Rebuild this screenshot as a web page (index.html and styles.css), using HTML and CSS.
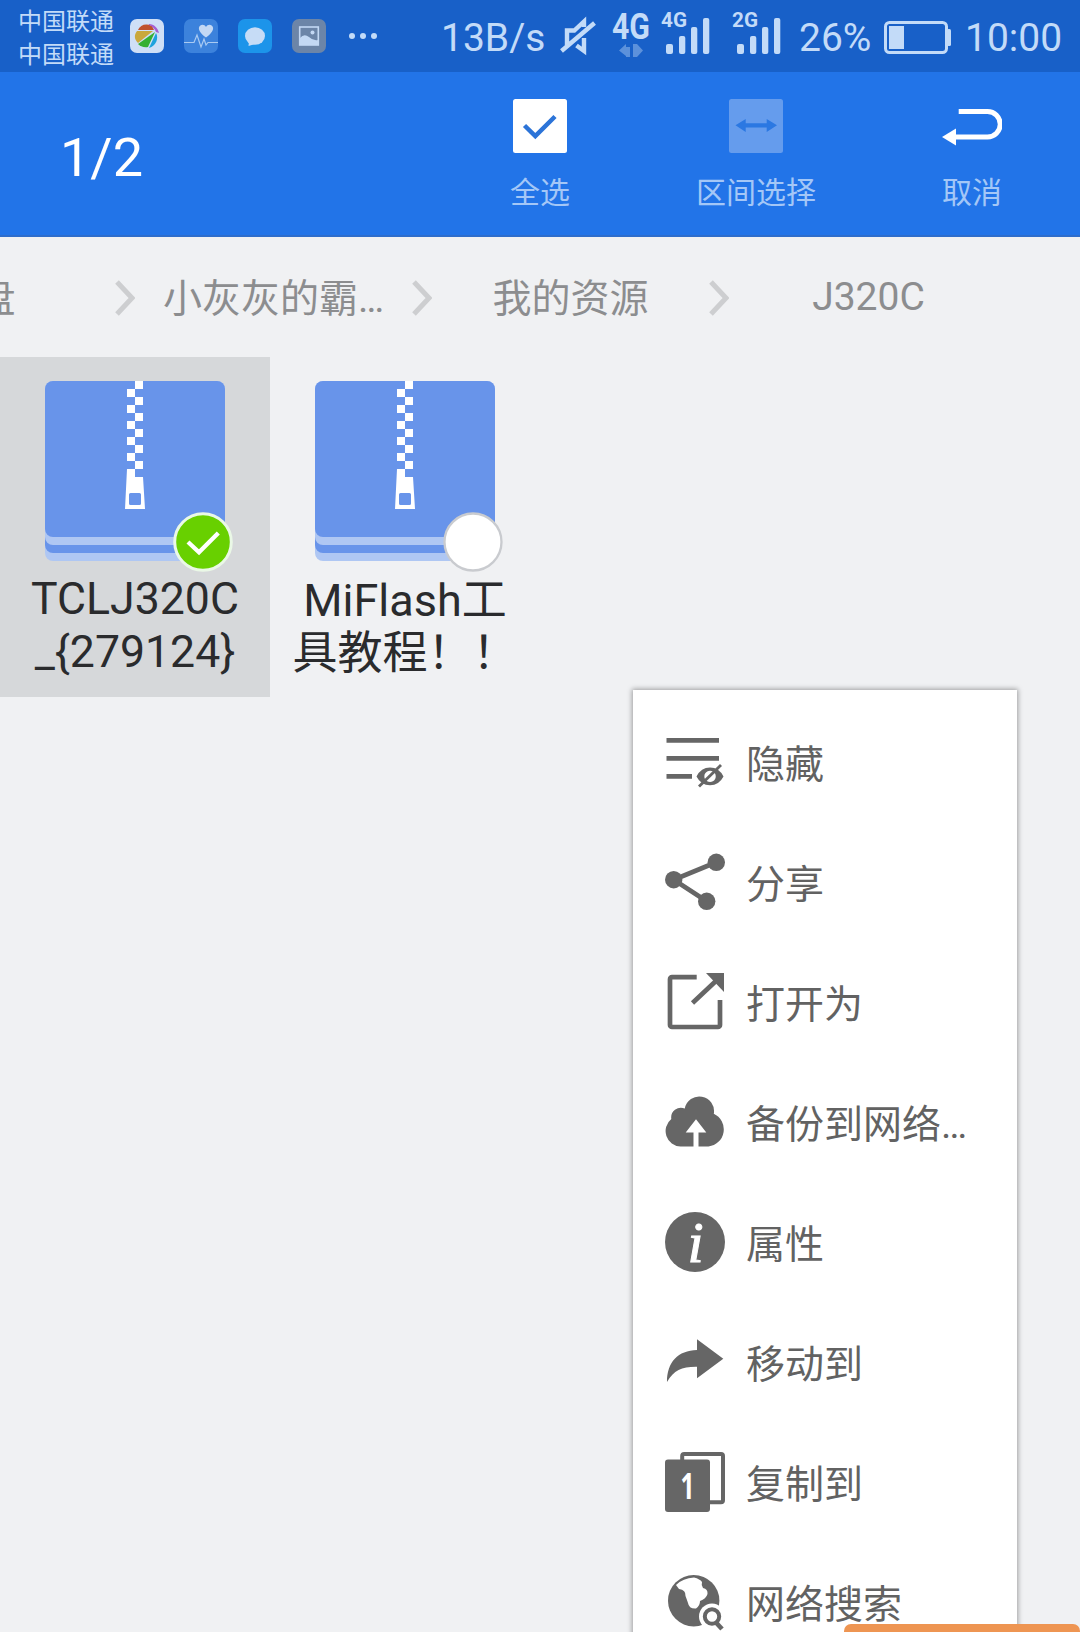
FILE: index.html
```html
<!DOCTYPE html>
<html lang="zh-CN">
<head>
    <meta charset="utf-8">
    <title>J320C</title>
    <link rel="stylesheet" href="styles.css">
</head>
<body>
    <svg class="defs" width="0" height="0">
        <symbol id="zip" viewBox="0 0 180 180">
            <rect width="180" height="180" rx="8" fill="#afc7f3" />
            <path d="M0 140H180V164a8 8 0 0 1-8 8H8a8 8 0 0 1-8-8Z" fill="#6894ea" />
            <path d="M0 140H180V156a8 8 0 0 1-8 8H8a8 8 0 0 1-8-8Z" fill="#afc7f3" />
            <rect width="180" height="156" rx="8" fill="#6894ea" />
            <path fill="#fff" d="M90 0h8v8h-8zM82 8h8v8h-8zM90 16h8v8h-8zM82 24h8v8h-8zM90 32h8v8h-8zM82 40h8v8h-8zM90 48h8v8h-8zM82 56h8v8h-8zM90 64h8v8h-8zM82 72h8v8h-8zM90 80h8v8h-8z" />
            <path fill="#fff" fill-rule="evenodd" d="M82 88h8v8h8l2 32H80ZM85.500 112a1.500 1.500 0 0 0-1.500 1.500v9a1.500 1.500 0 0 0 1.500 1.500h9a1.500 1.500 0 0 0 1.500-1.500v-9a1.500 1.500 0 0 0-1.500-1.500Z" />
        </symbol>
        <symbol id="bars" viewBox="0 0 44 37">
            <rect x="0" y="26" width="7" height="10" rx="2" />
            <rect x="13" y="18" width="6.300" height="18" rx="2" />
            <rect x="25" y="9" width="6.300" height="27" rx="2" />
            <rect x="37" y="0" width="6.300" height="36" rx="2" />
        </symbol>
    </svg>

    <header class="status">
        <div class="carriers">
            <span>中国联通</span>
            <span>中国联通</span>
        </div>
        <div class="notifications">
            <svg width="34" height="34" viewBox="0 0 34 34">
                <rect width="34" height="34" rx="7" fill="#cfdff6" />
                <path d="M8 11C10 6 16 4 22 7L24 11Z" fill="#c0512c" />
                <path d="M19 5C24 5 28 9 29 14L26 13C25 10 22 7 19 6Z" fill="#a65fd0" />
                <path d="M7 12L23 12L8 24C4 20 4 16 7 12Z" fill="#c9a83c" />
                <path d="M25 13L18 28C14 29 10 27 8 25Z" fill="#35b032" />
                <path d="M26 14C29 19 26 27 19 29Z" fill="#1ea2dd" />
            </svg>
            <svg width="34" height="34" viewBox="0 0 34 34">
                <rect width="34" height="34" rx="7" fill="#3c82dc" />
                <path d="M22 18.500C16 14 14.500 11 15 8.500C16 5 20.500 5 22 8C23.500 5 28 5 29 8.500C29.500 11 28 14 22 18.500Z" fill="#c3d8f4" />
                <path d="M0 23.500H10L13 16L17 28L20 20L22 26L24 23.500H34" fill="none" stroke="#a9caf2" stroke-width="1.200" />
            </svg>
            <svg width="34" height="34" viewBox="0 0 34 34">
                <rect width="34" height="34" rx="7" fill="#1c94ea" />
                <ellipse cx="17" cy="17" rx="10" ry="8.700" fill="#c6dcf6" />
                <path d="M11 22L10.500 27L17 25Z" fill="#c6dcf6" />
            </svg>
            <svg width="34" height="34" viewBox="0 0 34 34">
                <rect width="34" height="34" rx="7" fill="#6c85a8" />
                <rect x="7.700" y="8" width="18.600" height="18" fill="none" stroke="#c3d8f4" stroke-width="1.600" />
                <path d="M8 19Q12 14 17 18Q21 22 26 21V26H8Z" fill="#c3d8f4" />
                <circle cx="20.500" cy="13.500" r="2" fill="#c3d8f4" />
            </svg>
            <svg class="more" width="30" height="34" viewBox="0 0 30 34">
                <circle cx="4" cy="17" r="3" />
                <circle cx="15" cy="17" r="3" />
                <circle cx="26" cy="17" r="3" />
            </svg>
        </div>
        <div class="system">
            <span class="speed">13B/s</span>
            <svg class="mute" width="38" height="42" viewBox="0 0 38 42">
                <path d="M8 30V15.500H15.300L25 6.500V12M17.500 30.500L25 36V23M2.500 36L35.500 8" />
            </svg>
            <svg class="network" width="42" height="54" viewBox="0 0 42 54">
                <text x="1" y="33" textLength="38" lengthAdjust="spacingAndGlyphs">4G</text>
                <path d="M8 44.500L15 38V41H19V51H15V50ZM32 44.500L26 38H22V51H26Z" opacity=".4" />
            </svg>
            <svg class="signal" width="50" height="48" viewBox="0 0 50 48">
                <text x="0" y="18" textLength="26" lengthAdjust="spacingAndGlyphs">4G</text>
                <use href="#bars" x="5" y="9" width="44" height="37" />
            </svg>
            <svg class="signal second" width="50" height="48" viewBox="0 0 50 48">
                <text x="0" y="18" textLength="26" lengthAdjust="spacingAndGlyphs">2G</text>
                <use href="#bars" x="5" y="9" width="44" height="37" />
            </svg>
            <span class="percent">26%</span>
            <svg class="battery" width="68" height="34" viewBox="0 0 68 34">
                <rect x="1.500" y="1.500" width="61" height="30" rx="4" fill="none" stroke="#c3dbf8" stroke-width="3" />
                <rect x="5" y="5" width="15" height="23" />
                <rect x="63" y="8" width="4" height="17" rx="1.500" />
            </svg>
            <span class="clock">10:00</span>
        </div>
    </header>

    <nav class="toolbar">
        <div class="count">1/2</div>
        <div class="action">
            <svg width="54" height="54" viewBox="0 0 54 54">
                <rect width="54" height="54" rx="2.500" fill="#fff" />
                <path d="M11.500 26.500L22.300 37L42 17.500" fill="none" stroke="#2c74d8" stroke-width="4.500" />
            </svg>
            <span>全选</span>
        </div>
        <div class="action">
            <svg width="54" height="54" viewBox="0 0 54 54">
                <rect width="54" height="54" rx="2.500" fill="#659ced" />
                <path d="M6.500 26.300L16.700 20V24.200H37.700V20L48 26.300L37.700 33V28.500H16.700V33Z" fill="#2b78e2" />
            </svg>
            <span>区间选择</span>
        </div>
        <div class="action">
            <svg width="60" height="54" viewBox="0 0 60 54">
                <path d="M16.700 12.500H45.500a12.600 12.600 0 0 1 0 25.500H12" fill="none" stroke="#fff" stroke-width="5" />
                <path d="M0 38L14 29.500V46.500Z" fill="#fff" />
            </svg>
            <span>取消</span>
        </div>
    </nav>

    <div class="breadcrumb">
        <div class="crumb"><span>网盘</span><svg width="20" height="36" viewBox="0 0 20 36"><path d="M2 2L17 18L2 34" /></svg></div>
        <div class="crumb"><span>小灰灰的霸…</span><svg width="20" height="36" viewBox="0 0 20 36"><path d="M2 2L17 18L2 34" /></svg></div>
        <div class="crumb"><span>我的资源</span><svg width="20" height="36" viewBox="0 0 20 36"><path d="M2 2L17 18L2 34" /></svg></div>
        <div class="crumb last"><span>J320C</span></div>
    </div>

    <main class="files">
        <div class="file selected">
            <div class="thumb">
                <svg width="180" height="180"><use href="#zip" /></svg>
                <svg class="badge" width="60" height="60" viewBox="0 0 60 60">
                    <circle cx="30" cy="30" r="28.300" fill="#68d000" stroke="#eaf8e6" stroke-width="3" />
                    <path d="M15 30L26 40.300L45.300 21" fill="none" stroke="#fff" stroke-width="4.300" />
                </svg>
            </div>
            <div class="name">TCLJ320C<br>_{279124}</div>
        </div>
        <div class="file">
            <div class="thumb">
                <svg width="180" height="180"><use href="#zip" /></svg>
                <svg class="badge" width="60" height="60" viewBox="0 0 60 60">
                    <circle cx="30" cy="30" r="28.500" fill="#fff" stroke="#c9cbcf" stroke-width="2.300" />
                </svg>
            </div>
            <div class="name chinese">MiFlash工<br>具教程！！</div>
        </div>
    </main>

    <ul class="menu">
        <li>
            <svg width="60" height="60" viewBox="0 0 60 60">
                <path class="line" d="M1.500 8.300H54M1.500 26.300H54M1.500 44.300H27" />
                <path fill-rule="evenodd" d="M31.500 44.500Q36 35.500 45 35.500T58.500 44.500Q54 53.300 45 53.300T31.500 44.500ZM45 38.700a5.700 5.700 0 1 0 .1 0Z" />
                <path d="M34 54.500L56 33" fill="none" stroke="#666" stroke-width="2.800" />
            </svg>
            <span>隐藏</span>
        </li>
        <li>
            <svg width="60" height="60" viewBox="0 0 60 60">
                <path class="line" d="M51.300 10.300L8.700 27.700L41.700 49.300" />
                <circle cx="51.300" cy="10.300" r="8.700" />
                <circle cx="8.700" cy="27.700" r="8.700" />
                <circle cx="41.700" cy="49.300" r="8.700" />
            </svg>
            <span>分享</span>
        </li>
        <li>
            <svg width="60" height="60" viewBox="0 0 60 60">
                <path class="line" d="M31.700 5.200H7A2 2 0 0 0 5 7.200V53a2 2 0 0 0 2 2H53a2 2 0 0 0 2-2V28M27.500 31L52 8" />
                <path d="M41 1H59V20Z" />
            </svg>
            <span>打开为</span>
        </li>
        <li>
            <svg width="60" height="60" viewBox="0 0 60 60">
                <path d="M15.500 54.500A15.500 15.500 0 0 1 6.300 27A9.800 9.800 0 0 1 19.800 16.500A14.600 14.600 0 0 1 48.800 21.800A17.200 17.200 0 0 1 43.500 54.500Z" />
                <path d="M31 27.300L41.300 40.500H33.500V55H28.500V40.500H20.700Z" fill="#fff" />
            </svg>
            <span>备份到网络…</span>
        </li>
        <li>
            <svg width="60" height="60" viewBox="0 0 60 60">
                <circle cx="30" cy="30" r="30" />
                <text class="info" x="30.500" y="49.500" text-anchor="middle">i</text>
            </svg>
            <span>属性</span>
        </li>
        <li>
            <svg width="60" height="60" viewBox="0 0 60 60">
                <path d="M32 7.300L58.300 26.700L32 46.300V34.700C17 34.500 9 38 2 50C2 30 13 18.500 32 18Z" />
            </svg>
            <span>移动到</span>
        </li>
        <li>
            <svg width="60" height="60" viewBox="0 0 60 60">
                <rect x="17.200" y="2" width="40.800" height="48.300" rx="2" fill="none" stroke="#666" stroke-width="4" />
                <rect x="0" y="7.500" width="45" height="52.500" rx="3" />
                <text class="copy" x="15.500" y="47" textLength="14" lengthAdjust="spacingAndGlyphs">1</text>
            </svg>
            <span>复制到</span>
        </li>
        <li>
            <svg width="60" height="60" viewBox="0 0 60 60">
                <circle cx="28.700" cy="28.700" r="25.700" />
                <path d="M11 13Q18 6 29 5.500Q35 7 37 10Q36 13 38 16Q43 17 42.500 22Q41 27 35 29Q35 34 31 36.500Q24 37 23 31Q22 28 20.500 24Q21 18 14 17Z" fill="#fff" />
                <circle cx="47" cy="44.500" r="13" fill="#fff" />
                <circle cx="47" cy="44.500" r="7.200" fill="none" stroke="#666" stroke-width="4" />
                <path class="line" d="M50.500 50L57 57" />
            </svg>
            <span>网络搜索</span>
        </li>
    </ul>

    <div class="bottom-tip"></div>
</body>
</html>
```

FILE: styles.css
```css
* {
    box-sizing: border-box;
}
body {
    position: relative;
    margin: 0;
    width: 1080px;
    height: 1632px;
    overflow: hidden;
    background: #f0f1f3;
    font-family: Roboto, "Noto Sans CJK SC", sans-serif;
    white-space: nowrap;
}
svg {
    display: block;
    flex: none;
}
.defs {
    position: absolute;
}

/* status bar */
.status {
    display: flex;
    height: 72px;
    padding: 0 18px;
    background: #1860c8;
    color: #c3dbf8;
    fill: #c3dbf8;
}
.carriers {
    display: flex;
    flex-direction: column;
    width: 112px;
    padding-top: 6px;
    font-size: 24px;
    line-height: 33px;
}
.notifications {
    display: flex;
    gap: 20px;
    padding-top: 19px;
}
.more {
    margin-left: 2px;
}
.system {
    display: flex;
    align-items: flex-start;
    margin-left: auto;
    font-size: 39px;
    line-height: 76px;
}
.speed {
    width: 115px;
}
.mute {
    margin: 15px 14px 0 3px;
    fill: none;
    stroke: #c3dbf8;
    stroke-width: 4.4;
}
.network {
    margin: 6px 8px 0 0;
    font: 700 37px Roboto, sans-serif;
}
.signal {
    margin: 9px 21px 0 0;
    font: 700 21px Roboto, sans-serif;
}
.signal.second {
    margin-right: 17px;
}
.percent {
    width: 85px;
}
.battery {
    margin-top: 21px;
}
.clock {
    width: 97px;
    margin-left: 13px;
}

/* selection toolbar */
.toolbar {
    display: flex;
    height: 165px;
    background: #2274e8;
    border-bottom: 2px solid #2e6dcb;
}
.count {
    width: 432px;
    padding-left: 60px;
    color: #fff;
    font-size: 54px;
    line-height: 171px;
}
.action {
    display: flex;
    flex-direction: column;
    align-items: center;
    width: 216px;
    padding-top: 27px;
    color: #a4c7f7;
    font-size: 30px;
    line-height: 40px;
}
.action span {
    margin-top: 20px;
}

/* path */
.breadcrumb {
    display: flex;
    justify-content: flex-end;
    height: 120px;
    padding-right: 54px;
    overflow: hidden;
    color: #8c8d8f;
    font-size: 39px;
}
.crumb {
    display: flex;
    flex: none;
    align-items: center;
    width: 297px;
    height: 116px;
}
.crumb span {
    width: 277px;
    text-align: center;
}
.crumb.last {
    height: 120px;
    padding-left: 1px;
}
.crumb path {
    fill: none;
    stroke: #cdced0;
    stroke-width: 5;
}
.crumb svg {
    margin-top: 6px;
}

/* files */
.files {
    display: flex;
}
.file {
    width: 270px;
    height: 340px;
    padding-top: 24px;
}
.file.selected {
    background: #d6d8da;
}
.thumb {
    position: relative;
    width: 180px;
    margin: 0 auto;
}
.badge {
    position: absolute;
    left: 128px;
    top: 131px;
}
.name {
    margin-top: 12px;
    color: #2a2b2d;
    font-size: 44.6px;
    line-height: 53px;
    text-align: center;
}
.name.chinese {
    margin-top: 13px;
    font-size: 45px;
}

/* popup menu */
.menu {
    position: absolute;
    left: 633px;
    top: 690px;
    width: 384px;
    height: 1000px;
    margin: 0;
    padding: 12px 0 0 32px;
    list-style: none;
    background: #fff;
    box-shadow: 0 0 5px 1px rgba(0, 0, 0, .35);
    color: #626262;
    fill: #666;
    font-size: 39px;
}
.menu li {
    display: flex;
    align-items: center;
    gap: 21px;
    height: 120px;
}
.menu span {
    padding-bottom: 2px;
}
.menu .line {
    fill: none;
    stroke: #666;
    stroke-width: 4.7;
}
.menu text {
    fill: #fff;
}
.menu .info {
    font: italic 400 58px "Liberation Serif", serif;
    stroke: #fff;
    stroke-width: 1;
}
.copy {
    font: 700 35px "Open Sans", sans-serif;
}

.bottom-tip {
    position: absolute;
    left: 844px;
    top: 1624px;
    width: 236px;
    height: 40px;
    border-radius: 7px;
    background: #ee9552;
}
```
